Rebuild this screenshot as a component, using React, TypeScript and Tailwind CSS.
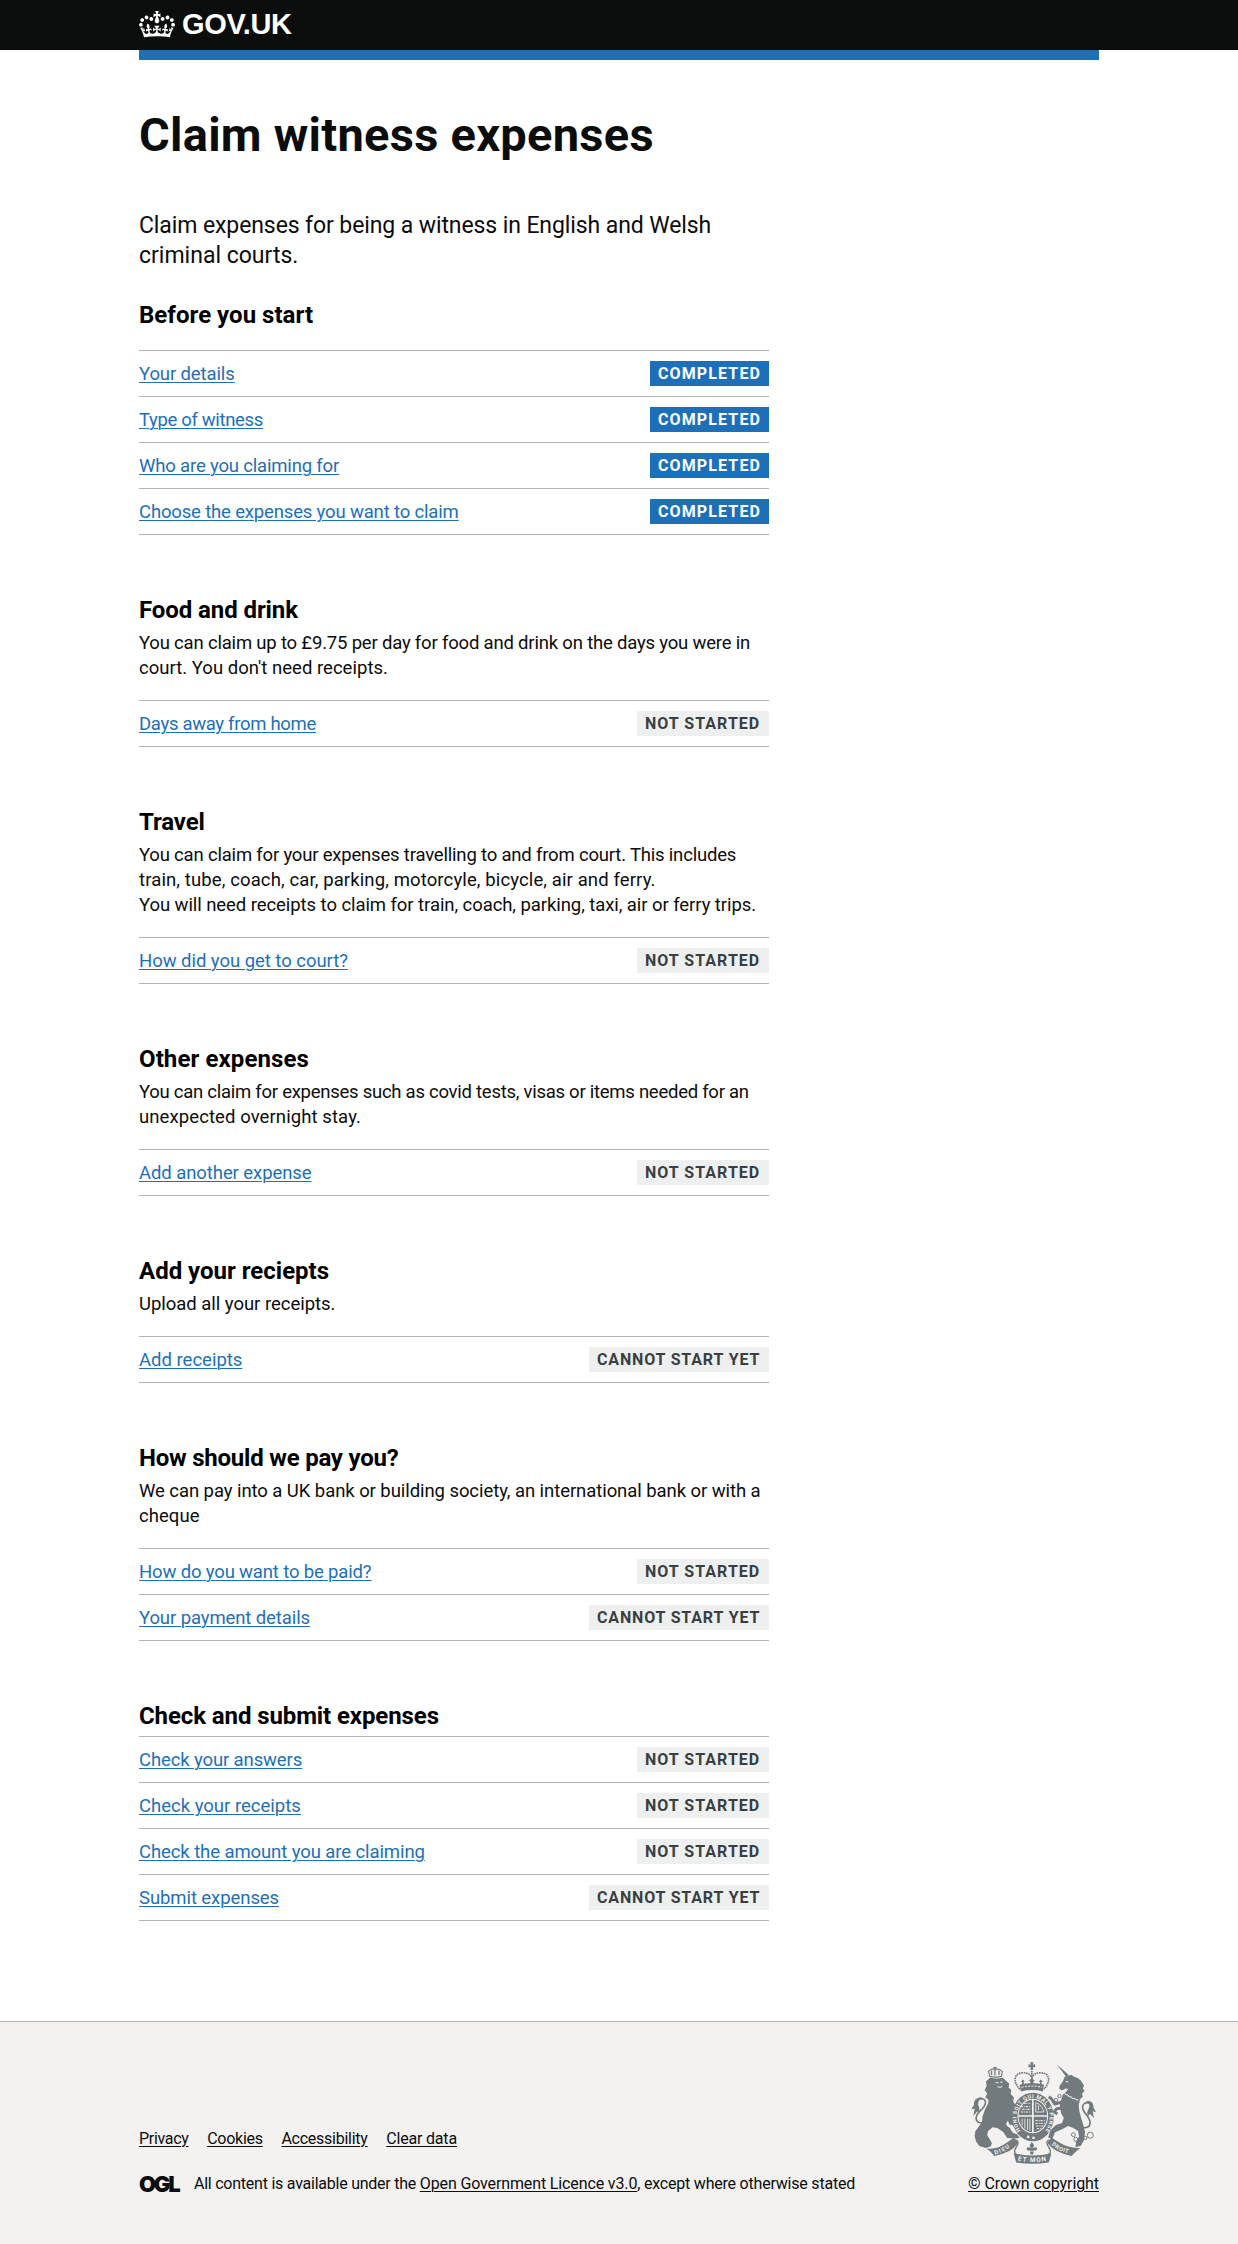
import React from 'react';

type Status = 'COMPLETED' | 'NOT STARTED' | 'CANNOT START YET';
type Line = { text: string; track: string };
type Task = Line & { status: Status };
type Section = { title: Line; text: Line[]; tasks: Task[]; headingGap: string };

const sections: Section[] = [
  {
    title: { text: 'Before you start', track: 'tracking-[0.03px]' },
    headingGap: 'mb-5',
    text: [],
    tasks: [
      { text: 'Your details', track: 'tracking-[-0.12px]', status: 'COMPLETED' },
      { text: 'Type of witness', track: 'tracking-[-0.34px]', status: 'COMPLETED' },
      { text: 'Who are you claiming for', track: 'tracking-[-0.17px]', status: 'COMPLETED' },
      { text: 'Choose the expenses you want to claim', track: 'tracking-[-0.16px]', status: 'COMPLETED' },
    ],
  },
  {
    title: { text: 'Food and drink', track: 'tracking-[-0.09px]' },
    headingGap: 'mb-[5px]',
    text: [
      { text: 'You can claim up to £9.75 per day for food and drink on the days you were in', track: 'tracking-[-0.19px]' },
      { text: "court. You don't need receipts.", track: 'tracking-[0.02px]' },
    ],
    tasks: [{ text: 'Days away from home', track: 'tracking-[-0.31px]', status: 'NOT STARTED' }],
  },
  {
    title: { text: 'Travel', track: 'tracking-[-0.1px]' },
    headingGap: 'mb-[5px]',
    text: [
      { text: 'You can claim for your expenses travelling to and from court. This includes', track: 'tracking-[-0.19px]' },
      { text: 'train, tube, coach, car, parking, motorcyle, bicycle, air and ferry.', track: 'tracking-[0.12px]' },
      { text: 'You will need receipts to claim for train, coach, parking, taxi, air or ferry trips.', track: 'tracking-[-0.07px]' },
    ],
    tasks: [{ text: 'How did you get to court?', track: 'tracking-[-0.04px]', status: 'NOT STARTED' }],
  },
  {
    title: { text: 'Other expenses', track: 'tracking-[0.1px]' },
    headingGap: 'mb-[5px]',
    text: [
      { text: 'You can claim for expenses such as covid tests, visas or items needed for an', track: 'tracking-[-0.26px]' },
      { text: 'unexpected overnight stay.', track: 'tracking-[0.09px]' },
    ],
    tasks: [{ text: 'Add another expense', track: 'tracking-[-0.08px]', status: 'NOT STARTED' }],
  },
  {
    title: { text: 'Add your reciepts', track: 'tracking-[0px]' },
    headingGap: 'mb-[5px]',
    text: [{ text: 'Upload all your receipts.', track: 'tracking-[-0.03px]' }],
    tasks: [{ text: 'Add receipts', track: 'tracking-[0px]', status: 'CANNOT START YET' }],
  },
  {
    title: { text: 'How should we pay you?', track: 'tracking-[-0.22px]' },
    headingGap: 'mb-[5px]',
    text: [
      { text: 'We can pay into a UK bank or building society, an international bank or with a', track: 'tracking-[-0.07px]' },
      { text: 'cheque', track: 'tracking-[0.05px]' },
    ],
    tasks: [
      { text: 'How do you want to be paid?', track: 'tracking-[-0.15px]', status: 'NOT STARTED' },
      { text: 'Your payment details', track: 'tracking-[-0.1px]', status: 'CANNOT START YET' },
    ],
  },
  {
    title: { text: 'Check and submit expenses', track: 'tracking-[-0.1px]' },
    headingGap: 'mb-[5px]',
    text: [],
    tasks: [
      { text: 'Check your answers', track: 'tracking-[-0.12px]', status: 'NOT STARTED' },
      { text: 'Check your receipts', track: 'tracking-[0px]', status: 'NOT STARTED' },
      { text: 'Check the amount you are claiming', track: 'tracking-[-0.09px]', status: 'NOT STARTED' },
      { text: 'Submit expenses', track: 'tracking-[-0.08px]', status: 'CANNOT START YET' },
    ],
  },
];

const tagStyles: Record<Status, string> = {
  COMPLETED: 'w-[119px] bg-[#1d70b8] text-white tracking-[1.12px]',
  'NOT STARTED': 'w-[132px] bg-[#eeefef] text-[#383f43] tracking-[1.02px]',
  'CANNOT START YET': 'w-[180px] bg-[#eeefef] text-[#383f43] tracking-[0.84px]',
};

function Tag({ status }: { status: Status }) {
  return (
    <strong className={`h-[25px] whitespace-nowrap pl-2 text-[16px] leading-[25px] font-bold ${tagStyles[status]}`}>
      {status}
    </strong>
  );
}

function Crown() {
  return (
    <svg viewBox="0 0 132 97" className="mt-[11px] h-[26.5px] w-9 fill-white" aria-hidden="true">
      <path d="M25 30.2c3.5 1.5 7.7-.2 9.1-3.7 1.5-3.6-.2-7.8-3.9-9.2-3.6-1.4-7.6.3-9.1 3.9-1.4 3.5.3 7.5 3.9 9zM9 39.5c3.6 1.5 7.8-.2 9.2-3.7 1.5-3.6-.2-7.8-3.9-9.1-3.6-1.5-7.6.2-9.1 3.8-1.4 3.5.3 7.5 3.8 9zM4.4 57.2c3.5 1.5 7.7-.2 9.1-3.8 1.5-3.6-.2-7.7-3.9-9.1-3.5-1.5-7.6.3-9.1 3.8-1.4 3.5.3 7.6 3.9 9.1zm38.3-21.4c3.5 1.5 7.7-.2 9.1-3.8 1.5-3.6-.2-7.7-3.9-9.1-3.6-1.5-7.6.3-9.1 3.8-1.3 3.6.4 7.7 3.9 9.1zm64.4-5.6c-3.6 1.5-7.8-.2-9.1-3.7-1.5-3.6.2-7.8 3.8-9.2 3.6-1.4 7.7.3 9.2 3.9 1.3 3.5-.4 7.5-3.9 9zm15.9 9.3c-3.6 1.5-7.7-.2-9.1-3.7-1.5-3.6.2-7.8 3.7-9.1 3.6-1.5 7.7.2 9.2 3.8 1.5 3.5-.3 7.5-3.8 9zm4.7 17.7c-3.6 1.5-7.8-.2-9.2-3.8-1.5-3.6.2-7.7 3.9-9.1 3.6-1.5 7.7.3 9.2 3.8 1.3 3.5-.4 7.6-3.9 9.1zM89.3 35.8c-3.6 1.5-7.8-.2-9.2-3.8-1.4-3.6.2-7.7 3.9-9.1 3.6-1.5 7.7.3 9.2 3.8 1.4 3.6-.3 7.7-3.9 9.1zM69.7 17.7l8.9 4.7V9.3l-8.9 2.8c-.2-.3-.5-.6-.9-.9L72.4 0H59.6l3.5 11.2c-.3.3-.6.5-.9.9l-8.8-2.8v13.1l8.8-4.7c.3.3.6.7.9.9l-5 15.4v.1c-.2.8-.4 1.6-.4 2.4 0 4.1 3.1 7.5 7 8.1h.2c.3 0 .7.1 1 .1.4 0 .7 0 1-.1h.2c4-.6 7.1-4.1 7.1-8.1 0-.8-.1-1.7-.4-2.4V34l-5.1-15.4c.4-.2.7-.6 1-.9zM66 92.8c16.9 0 32.8 1.1 47.1 3.2 4-16.9 8.9-26.7 14-33.5l-9.6-3.4c1 4.9 1.1 7.2 0 10.2-1.5-1.4-3-4.3-4.2-8.7L108.6 76c2.8-2 5-3.2 7.5-3.3-4.4 9.4-10 11.9-13.6 11.2-4.3-.8-6.3-4.6-5.6-7.9 1-4.7 5.7-5.9 8-.5 4.3-8.7-3-11.4-7.6-8.8 7.1-7.2 7.9-13.5 2.1-21.1-8 6.1-8.1 12.3-4.5 20.8-4.7-5.4-12.1-2.5-9.5 6.2 3.4-5.2 7.9-2 7.2 3.1-.6 4.3-6.4 7.8-13.5 7.2-10.3-.9-10.9-8-11.2-13.8 2.5-.5 7.1 1.8 11 7.3L80.2 60c-4.1 4.4-8 5.3-12.3 5.4 1.4-4.4 8-11.6 8-11.6H55.5s6.4 7.2 7.9 11.6c-4.2-.1-8-1-12.3-5.4l1.4 16.4c3.9-5.5 8.5-7.7 10.9-7.3-.3 5.8-.9 12.8-11.1 13.8-7.2.6-12.9-2.9-13.5-7.2-.7-5 3.8-8.3 7.1-3.1 2.7-8.7-4.6-11.6-9.4-6.2 3.7-8.5 3.6-14.7-4.6-20.8-5.8 7.6-5 13.9 2.2 21.1-4.7-2.6-11.9.1-7.7 8.8 2.3-5.5 7.1-4.2 8.1.5.7 3.3-1.3 7.1-5.7 7.9-3.5.7-9-1.8-13.5-11.2 2.5.1 4.7 1.3 7.5 3.3l-4.7-15.4c-1.2 4.4-2.7 7.2-4.3 8.7-1.1-3-.9-5.3 0-10.2l-9.5 3.4c5 6.9 9.9 16.7 14 33.5 14.8-2.1 30.8-3.2 47.7-3.2z" />
    </svg>
  );
}

const G = '#737a7d';
const P = '#f3f2f1';

function CoatOfArms() {
  return (
    <svg viewBox="62 66 376 306" className="h-full w-full overflow-visible" aria-hidden="true" fill={G} fontFamily="Roboto, sans-serif" fontWeight="700">
      {/* lion: tail, body, crown */}
      <path d="M104 246C74 256 70 232 90 212c20-18 20-34 4-36-12 0-14 10-12 16" fill="none" stroke={G} strokeWidth="5" />
      <path d="M97 172c-14-2-28 8-26 22l-8 14 10-2-4 22 12-14 4 8c6-14 0-22-2-30 0-12 6-16 14-20z" />
      <path d="M120 112q18 6 37 0l10 10 10 8-2 12 8 8-2 12 10 10-2 12 6 12-8 14 2 18-2 24-8 4-6-14-6 10q2 8 12 12l8 14 14 6 8 10-18 2-20-2-12-18-18-12-14-2-14 12-2 12 6 10 8 14-4 10-14 4-20-6-10-14-4-16 2-14 10-14 10-14 2-18 8-22 8-14 2-12-10-8 6-12-8-10 6-12-2-14z" />
      <path d="M136 128h9M150 126h7M142 140q8 4 14-1" stroke={P} strokeWidth="3" fill="none" />
      <path d="M184 200l12-6 10 6-4 8 8 4-10 8-14-2zM182 236l12 4 4 10 10 4-4 10-14-4-10-12z" />
      <path d="M118 108l-3-14q8-10 19-6 12-4 22 6l-2 14q-18 6-36 0z" fill="none" stroke={G} strokeWidth="3.5" />
      <path d="M134 80v26M129 83h10M124 92v13M146 92v13" stroke={G} strokeWidth="4" />
      {/* unicorn: horn, tail, body, forelegs */}
      <path d="M320 72l28 38 8-5z" />
      <path d="M392 262c32 6 34-14 20-34-14-16-20-30-8-38 12-6 20 2 18 12" fill="none" stroke={G} strokeWidth="5" />
      <path d="M408 184c14-4 24 6 22 18l8 14-10-2 4 20-12-12-6 6c-6-12 2-20 4-28 0-8-4-12-10-16z" />
      <path d="M344 110L364 104L372 110Q392 116 396 128L402 136L398 146L404 152L396 160L398 170L390 178L386 196L388 214L394 236L400 256L405 276L402 300L392 318L376 321L378 306L387 290L384 273L370 264L354 258L336 268L315 277L306 298L294 293L301 271L317 255L336 249L341 234L333 220L329 198L333 180L338 164Q348 158 354 147L346 145L336 151L328 147L328 138L338 124Z" />
      <path d="M336 186L314 192L304 176L296 170M336 204L320 206L312 216L322 222" fill="none" stroke={G} strokeWidth="9" strokeLinejoin="round" />
      <path d="M343 158l5 7 6-1 3 7 7-1 3 6 7-1 4 5 7-1" fill="none" stroke={P} strokeWidth="3" />
      <path d="M347 124l8 2" stroke={P} strokeWidth="3" />
      <g fill="none" stroke={G} strokeWidth="3">
        <circle cx="370" cy="284" r="6" />
        <circle cx="377" cy="298" r="6" />
        <circle cx="391" cy="301" r="5" />
        <circle cx="406" cy="294" r="5" />
        <circle cx="421" cy="286" r="9" />
        <circle cx="318" cy="180" r="5" />
        <circle cx="328" cy="168" r="5" />
      </g>
      {/* royal crown */}
      <path d="M240 66h10l-2 8 7-2v10l-7-2 2 9h-10l2-9-7 2V72l7 2z" />
      <path d="M209 148c-24-26-16-50 10-50 14 0 22 6 26 14 4-8 12-14 26-14 26 0 34 24 10 50" fill="none" stroke={G} strokeWidth="5" strokeDasharray="5 2" />
      <path d="M245 92v26" stroke={G} strokeWidth="5" strokeDasharray="5 2" />
      <path d="M208 134q37-10 74 0l-4 20q-33-8-66 0z" />
      <path d="M214 142q31-8 62 0" fill="none" stroke={P} strokeWidth="3" strokeDasharray="6 4" />
      <path d="M239 134l2-9-5-3 9-8 9 8-5 3 2 9zM214 136l2-10-4-2 6-6 6 6-4 2 2 9zM276 136l-2-10 4-2-6-6-6 6 4 2-2 9z" />
      {/* garter and shield */}
      <ellipse cx="248" cy="231" rx="63" ry="73" />
      <ellipse cx="248" cy="228" rx="46" ry="52" fill={P} />
      <ellipse cx="248" cy="228" rx="43" ry="49" />
      <path d="M248 178v100M204 228h88" stroke={P} strokeWidth="5" />
      <path d="M212 200h30M216 208h26M212 216h28M222 190h18M256 242h30M256 250h28M258 258h22M260 266h14" stroke={P} strokeWidth="3" strokeDasharray="7 3 3 2" />
      <path d="M257 188q18 4 24 28h-24zM265 196v14M216 236v20M224 236v30M232 236v34M239 236v36" fill="none" stroke={P} strokeWidth="2.5" />
      <defs>
        <path id="motto" d="M211 272A50 59 0 1 1 286 272" />
        <path id="dieu" d="M134 344Q166 336 184 316" />
        <path id="droit" d="M304 314Q324 336 362 341" />
        <path id="etmon" d="M203 362Q246 371 292 362" />
      </defs>
      <text fill={P} fontSize="16">
        <textPath href="#motto" textLength="255">HONI SOIT QUI MAL Y PENSE</textPath>
      </text>
      <circle cx="234" cy="291" r="4" fill={P} />
      <circle cx="250" cy="294" r="4" fill={P} />
      {/* motto ribbon and fleur-de-lis */}
      <path d="M108 326q34 4 62-18l20-14q12 8 14 16-22 30-72 38-8-12-24-22z" />
      <path d="M390 324q-34 2-62-16l-22-14q-12 8-14 16 22 28 72 38 10-10 26-24z" />
      <path d="M190 300c20 0 14 14 8 22-10 14-2 22 6 24M304 300c-20 0-14 14-8 22 10 14 2 22-6 24" fill="none" stroke={G} strokeWidth="4" />
      <path d="M190 340q56 14 114 0l-8 28q-50 8-98 0z" />
      <path d="M245 306l7 10-4 9q10-6 13 1 0 8-10 6l-2 12h-8l-2-12q-10 2-10-6 3-7 13-1l-4-9z" />
      <path d="M234 334h22" stroke={P} strokeWidth="2" />
      <text fill={P} fontSize="17">
        <textPath href="#dieu" textLength="50">DIEU</textPath>
      </text>
      <text fill={P} fontSize="17">
        <textPath href="#droit" textLength="58">DROIT</textPath>
      </text>
      <text fill={P} fontSize="19">
        <textPath href="#etmon" textLength="86">ET MON</textPath>
      </text>
    </svg>
  );
}

const link = 'underline decoration-1 underline-offset-[2px]';

export default function App() {
  return (
    <div className="flex min-h-[2244px] flex-col bg-white font-[Roboto,'Liberation_Sans',sans-serif] text-[#0b0c0c]">
      <header className="bg-[#0b0c0c]">
        <div className="mx-auto flex h-[50px] w-[960px] text-white">
          <Crown />
          <span className="ml-[7px] mt-[10px] font-['Liberation_Sans',sans-serif] text-[29px] leading-[29px] font-bold tracking-[-0.35px]">
            GOV.UK
          </span>
        </div>
      </header>
      <main className="mx-auto w-[960px] border-t-[10px] border-[#1d70b8]">
        <div className="w-[630px] pt-[50px] whitespace-nowrap">
          <h1 className="mb-[51px] text-[47px] leading-[50px] font-bold tracking-[0.27px]">Claim witness expenses</h1>
          <p className="mb-[29px] text-[23px] leading-[30px]">
            <span className="block tracking-[-0.1px]">Claim expenses for being a witness in English and Welsh</span>
            <span className="block">criminal courts.</span>
          </p>
          {sections.map((s) => (
            <section key={s.title.text} className="mb-[60px]">
              <h2 className={`text-[24px] leading-[30px] font-bold text-black ${s.headingGap} ${s.title.track}`}>{s.title.text}</h2>
              {s.text.length > 0 && (
                <p className="mb-[19px] pt-px text-[18.5px] leading-[25px]">
                  {s.text.map((l) => (
                    <span key={l.text} className={`block ${l.track}`}>{l.text}</span>
                  ))}
                </p>
              )}
              <ul className="border-t border-[#b1b4b6]">
                {s.tasks.map((t) => (
                  <li key={t.text} className="flex h-[46px] justify-between border-b border-[#b1b4b6] pt-[10px]">
                    <a href="#" className={`mt-px text-[18.5px] leading-[25px] text-[#1d70b8] ${link} ${t.track}`}>{t.text}</a>
                    <Tag status={t.status} />
                  </li>
                ))}
              </ul>
            </section>
          ))}
        </div>
      </main>
      <footer className="mt-10 grow border-t border-[#b1b4b6] bg-[#f3f2f1] text-[16px] leading-5">
        <div className="mx-auto flex w-[960px] items-end justify-between pt-10">
          <div>
            <ul className="mb-[25px] flex gap-[18.6px]">
              <li><a href="#" className={`${link} tracking-[-0.31px]`}>Privacy</a></li>
              <li><a href="#" className={`${link} tracking-[-0.25px]`}>Cookies</a></li>
              <li><a href="#" className={`${link} tracking-[-0.25px]`}>Accessibility</a></li>
              <li><a href="#" className={`${link} tracking-[-0.19px]`}>Clear data</a></li>
            </ul>
            <div className="flex">
              <span className="w-[41px] font-[Inter] text-[22px] leading-5 font-black tracking-[-2.2px]">OGL</span>
              <span className="ml-[14px] whitespace-pre">
                <span className="tracking-[-0.24px]">All content is available under the </span>
                <a href="#" className={`${link} tracking-[-0.13px]`}>Open Government Licence v3.0</a>
                <span className="tracking-[-0.21px]">, except where otherwise stated</span>
              </span>
            </div>
          </div>
          <div className="flex flex-col items-end">
            <div className="mr-[3px] mb-[10px] h-[102px] w-[125px]"><CoatOfArms /></div>
            <a href="#" className={`${link} tracking-[-0.09px]`}>© Crown copyright</a>
          </div>
        </div>
      </footer>
    </div>
  );
}
